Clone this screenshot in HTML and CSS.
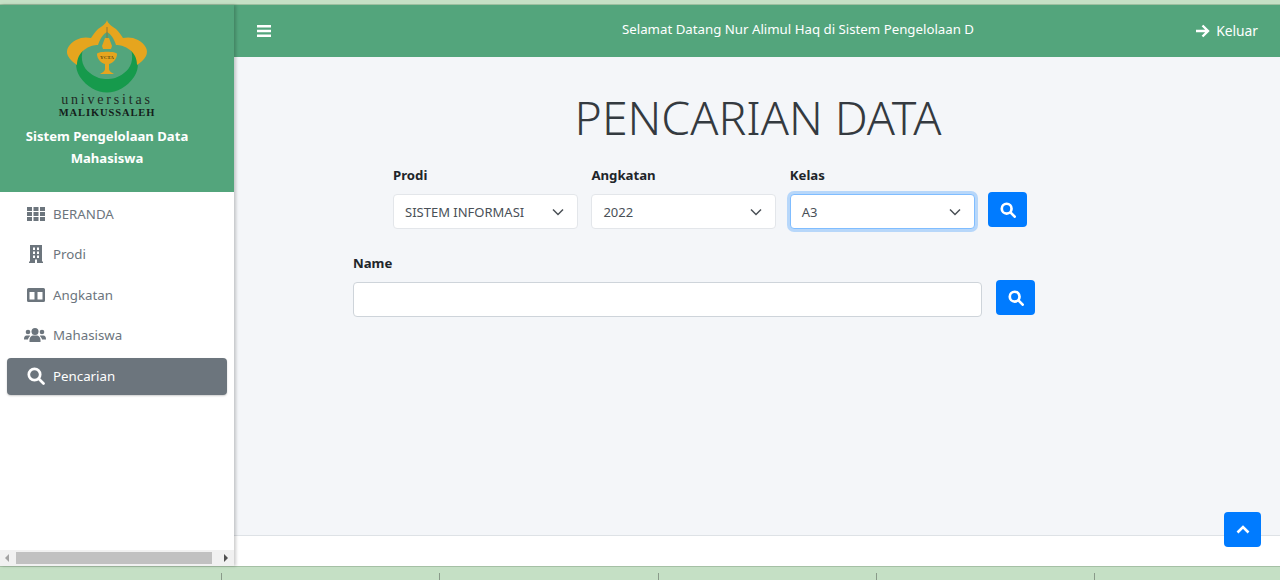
FILE: index.html
```html
<!DOCTYPE html>
<html lang="id">
<head>
<meta charset="utf-8">
<title>Pencarian Data</title>
<link rel="stylesheet" href="styles.css">
</head>
<body>
<div class="strip-top"></div>
<div class="app">
  <aside class="sidebar">
    <div class="brand">
      <svg class="logo" viewBox="57 17 100 76" width="100" height="76">
        <path class="green" d="M83 49 C75 58 74 68 80 77 C87 87 97 92.500 107 92.500 C117 92.500 127 87 134 77 C140 68 139 58 131 49 C134 60 131 68 124 73 C118 78 112 79 107 79 C102 79 96 78 90 73 C83 68 80 60 83 49Z"/>
        <path class="gold" d="M107 20 C108 24 112 26 116 29 C119 32 121 35 123 38 C127 37 133 37 138 40 C145 44 149 50 146 56 C144 60 140 63 137 65 C137 59 135 54 130 50 C125 46 120 45 116 45 C114 39 111 34 107 32 C103 34 100 39 98 45 C94 45 89 46 84 50 C79 54 77 59 77 65 C74 63 70 60 68 56 C65 50 69 44 76 40 C81 37 87 37 91 38 C93 35 95 32 98 29 C102 26 106 24 107 20Z"/>
        <path class="spire" d="M107 27 V40"/>
        <path class="gold" d="M105 38 H109 L112 46 L111 49 H103 L102 46Z"/>
        <path class="gold" d="M97 54 C97 51 117 51 117 54 C117 59 113 63 109 64 L109 69 C109 71 112 73 114 74 L100 74 C102 73 105 71 105 69 L105 64 C101 63 97 59 97 54Z"/>
        <text class="logo-mark" x="107" y="59" text-anchor="middle">YCTA</text>
      </svg>
      <div class="logo-word">universitas</div>
      <div class="logo-name">MALIKUSSALEH</div>
      <h1 class="brand-title">Sistem Pengelolaan Data Mahasiswa</h1>
    </div>
    <nav class="nav">
      <a class="nav-item">
        <svg class="nav-icon" viewBox="0 0 18 16" width="18" height="16"><path d="M0 1h5v4H0zM6.500 1h5v4h-5zM13 1h5v4h-5zM0 6h5v4H0zM6.500 6h5v4h-5zM13 6h5v4h-5zM0 11h5v4H0zM6.500 11h5v4h-5zM13 11h5v4h-5z"/></svg>
        <span>BERANDA</span>
      </a>
      <a class="nav-item">
        <svg class="nav-icon" viewBox="0 0 18 18" width="18" height="18"><path fill-rule="evenodd" d="M3 0h12v16.500h1V18H2v-1.500h1zM6 2.500V5h2V2.500zM10 2.500V5h2V2.500zM6 6.500V9h2V6.500zM10 6.500V9h2V6.500zM6 10.500V13h2v-2.500zM10 10.500V13h2v-2.500zM8 14.500V18h2v-3.500z"/></svg>
        <span>Prodi</span>
      </a>
      <a class="nav-item">
        <svg class="nav-icon" viewBox="0 0 18 16" width="18" height="16"><path fill-rule="evenodd" d="M1.500 1h15A1.500 1.500 0 0 1 18 2.500v11a1.500 1.500 0 0 1-1.500 1.500h-15A1.500 1.500 0 0 1 0 13.500v-11A1.500 1.500 0 0 1 1.500 1zM2.500 5v7.500h5V5zM10.500 5v7.500h5V5z"/></svg>
        <span>Angkatan</span>
      </a>
      <a class="nav-item">
        <svg class="nav-icon wide" viewBox="0 0 22 16" width="22" height="16"><circle cx="11" cy="4.500" r="3.500"/><circle cx="4" cy="5" r="2.300"/><circle cx="18" cy="5" r="2.300"/><path d="M5.500 15v-2c0-3 2-4.500 3.500-4.500h4c1.500 0 3.500 1.500 3.500 4.500v2zM0 12c0-2 1-3.500 2.500-3.500h2.700c.5 0 .8.200 1 .4C5 10 4.200 11 4 12.500H0zM22 12c0-2-1-3.500-2.500-3.500h-2.700c-.5 0-.8.200-1 .4 1.200 1.100 2 2.100 2.200 3.600H22z"/></svg>
        <span>Mahasiswa</span>
      </a>
      <a class="nav-item active">
        <svg class="nav-icon search-icon" viewBox="0 0 18 18" width="18" height="18"><circle cx="7.500" cy="7.500" r="5.700"/><path d="M12 12l4.500 4.500"/></svg>
        <span>Pencarian</span>
      </a>
    </nav>
    <div class="side-scroll">
      <span class="arrow-left"></span>
      <span class="thumb"></span>
      <span class="arrow-right"></span>
    </div>
  </aside>
  <div class="main">
    <header class="topbar">
      <svg class="bars" viewBox="0 0 14 12" width="14" height="12"><path d="M0 0h14v2.500H0zM0 4.700h14v2.500H0zM0 9.400h14v2.500H0z"/></svg>
      <div class="welcome">Selamat Datang Nur Alimul Haq di Sistem Pengelolaan D</div>
      <a class="logout">
        <svg class="logout-icon" viewBox="0 0 15 14" width="15" height="14"><path d="M1 7h12M7.500 1.500 13 7l-5.500 5.500"/></svg>
        <span>Keluar</span>
      </a>
    </header>
    <main class="content">
      <h2 class="page-title">PENCARIAN DATA</h2>
      <form class="filter-row">
        <div class="field">
          <label class="label">Prodi</label>
          <div class="select"><span>SISTEM INFORMASI</span><svg class="chevron" viewBox="0 0 12 8" width="12" height="8"><path d="M1 1.500 6 6.500l5-5"/></svg></div>
        </div>
        <div class="field">
          <label class="label">Angkatan</label>
          <div class="select"><span>2022</span><svg class="chevron" viewBox="0 0 12 8" width="12" height="8"><path d="M1 1.500 6 6.500l5-5"/></svg></div>
        </div>
        <div class="field">
          <label class="label">Kelas</label>
          <div class="select focus"><span>A3</span><svg class="chevron" viewBox="0 0 12 8" width="12" height="8"><path d="M1 1.500 6 6.500l5-5"/></svg></div>
        </div>
        <button class="btn" type="button"><svg class="btn-icon" viewBox="0 0 18 18" width="16" height="16"><circle cx="7.500" cy="7.500" r="5.500"/><path d="M12 12l4.500 4.500"/></svg></button>
      </form>
      <form class="name-row">
        <div class="field name-field">
          <label class="label">Name</label>
          <div class="input"></div>
        </div>
        <button class="btn" type="button"><svg class="btn-icon" viewBox="0 0 18 18" width="16" height="16"><circle cx="7.500" cy="7.500" r="5.500"/><path d="M12 12l4.500 4.500"/></svg></button>
      </form>
    </main>
    <footer class="footer"></footer>
    <a class="to-top"><svg class="up" viewBox="0 0 14 9" width="14" height="9"><path d="M1.500 7.500 7 2l5.500 5.500"/></svg></a>
  </div>
</div>
<div class="strip-bottom">
  <span class="cell"></span><span class="cell"></span><span class="cell"></span><span class="cell"></span><span class="cell"></span>
</div>
</body>
</html>
```
FILE: styles.css
```css
* { box-sizing: border-box; }
html, body { margin: 0; height: 580px; overflow: hidden; }
body {
  display: flex;
  flex-direction: column;
  font-family: "Noto Sans", "Liberation Sans", sans-serif;
  font-size: 14px;
  color: #343a40;
  background: #f4f6f9;
}
.strip-top { height: 5px; background: #c5e0c5; border-bottom: 1px solid #9dbf9f; flex: none; }
.app { flex: 1; display: flex; min-height: 0; }
.strip-bottom {
  height: 14px;
  flex: none;
  display: flex;
  background: #c5e0c5;
  border-top: 1px solid #a5c0a5;
}
.cell { width: 218.300px; margin-top: 6px; border-right: 1px solid #8a9a8a; }
.cell:first-child { width: 222px; }

.sidebar {
  width: 234px;
  flex: none;
  display: flex;
  flex-direction: column;
  background: #fff;
  box-shadow: 2px 0 3px rgba(0,0,0,.2);
  position: relative;
  z-index: 2;
}
.brand {
  height: 187px;
  background: #53a57c;
  display: flex;
  flex-direction: column;
  align-items: center;
  padding: 12px 20px 0 0;
}
.logo { display: block; flex: none; }
.gold { fill: #e6a51e; }
.green { fill: #169a4c; }
.spire { fill: none; stroke: #8a7a3a; stroke-width: 1; }
.logo-mark { font: bold 5px "Liberation Serif", serif; fill: #5a4a10; }
.logo-word {
  font-family: "Liberation Serif", serif;
  font-size: 14px;
  line-height: 14px;
  letter-spacing: 2.800px;
  color: #1f2a24;
}
.logo-name {
  font-family: "Liberation Serif", serif;
  font-weight: bold;
  font-size: 10.500px;
  line-height: 12px;
  letter-spacing: .9px;
  color: #14201a;
}
.brand-title {
  margin: 6px 0 0;
  width: 190px;
  text-align: center;
  font-size: 13.100px;
  font-weight: 700;
  line-height: 22px;
  color: #fff;
}
.nav { flex: 1; padding: 4px 7px 0 7px; display: flex; flex-direction: column; gap: 3.500px; }
.nav-item {
  height: 37px;
  flex: none;
  display: flex;
  align-items: center;
  padding: 0 0 2px 20px;
  gap: 8px;
  color: #6c757d;
  border-radius: 4px;
  font-size: 13.300px;
}
.nav-icon { fill: #6c757d; flex: none; }
.nav-icon.wide { margin-left: -3px; margin-right: -1px; }
.nav-item.active { background: #6c757d; color: #fff; box-shadow: 0 1px 2px rgba(0,0,0,.2); }
.search-icon { fill: none; stroke: #fff; stroke-width: 2.700; stroke-linecap: round; }
.side-scroll {
  height: 16px;
  background: #f1f1f1;
  display: flex;
  align-items: center;
  padding: 0 6px 0 5px;
}
.thumb { width: 196px; height: 12px; background: #c1c1c1; margin-left: 7px; margin-right: auto; }
.arrow-left { border: 4px solid transparent; border-left: 0; border-right: 4px solid #a3a3a3; }
.arrow-right { border: 4px solid transparent; border-right: 0; border-left: 4px solid #505050; }

.main { flex: 1; min-width: 0; display: flex; flex-direction: column; position: relative; }
.topbar {
  height: 52px;
  flex: none;
  background: #53a57c;
  display: flex;
  align-items: center;
  padding: 0 22px 0 23px;
  color: #fff;
}
.bars { fill: #fff; flex: none; margin-top: -1px; }
.welcome { margin-left: 351px; white-space: nowrap; font-size: 13.250px; margin-top: -5px; }
.logout { margin-left: auto; display: flex; align-items: center; gap: 6px; font-size: 13.800px; color: #fff; margin-top: -1px; }
.logout-icon { fill: none; stroke: #fff; stroke-width: 2.400; }

.content { flex: 1; padding-top: 31px; }
.page-title {
  margin: 0;
  padding-left: 2px;
  text-align: center;
  font-size: 46.400px;
  line-height: 58px;
  font-weight: 300;
  color: #343a40;
}
.filter-row, .name-row { display: flex; align-items: flex-end; }
.filter-row { margin: 19px 0 0 159px; gap: 13.400px; }
.name-row { margin: 24px 0 0 119px; gap: 14px; }
.field { display: flex; flex-direction: column; gap: 9px; width: 185px; }
.name-field { width: 629px; }
.label { font-weight: 700; font-size: 13.200px; line-height: 20px; color: #212529; }
.select {
  height: 35px;
  display: flex;
  align-items: center;
  justify-content: space-between;
  background: #fff;
  border: 1px solid #e3e6ea;
  border-radius: 4px;
  padding: 0 13px 0 11px;
  font-size: 13px;
  color: #495057;
}
.select.focus { border-color: #80bdff; box-shadow: 0 0 0 3px rgba(0,123,255,.25); }
.chevron { fill: none; stroke: #4a5056; stroke-width: 1.500; }
.input { height: 35px; background: #fff; border: 1px solid #ced4da; border-radius: 4px; }
.btn {
  width: 39px;
  height: 35px;
  margin-bottom: 2px;
  padding: 0;
  background: #007bff;
  border: 0;
  border-radius: 4px;
  display: flex;
  align-items: center;
  justify-content: center;
}
.btn-icon { fill: none; stroke: #fff; stroke-width: 3; stroke-linecap: round; }
.footer { height: 31px; flex: none; background: #fff; border-top: 1px solid #dee2e6; }
.to-top {
  position: absolute;
  right: 19px;
  bottom: 19px;
  width: 37px;
  height: 35px;
  background: #007bff;
  border-radius: 4px;
  display: flex;
  align-items: center;
  justify-content: center;
}
.up { fill: none; stroke: #fff; stroke-width: 2.600; }
```
